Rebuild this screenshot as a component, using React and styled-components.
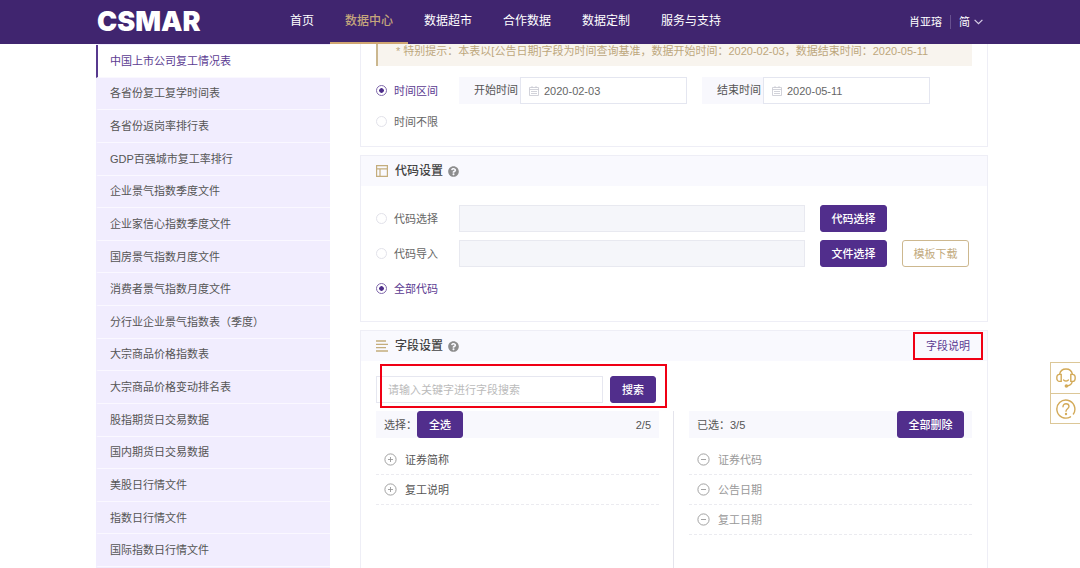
import React, { useState } from 'react';
import styled, { createGlobalStyle } from 'styled-components';
import { FaQuestionCircle } from 'react-icons/fa';

const GlobalStyle = createGlobalStyle`
    * {
        box-sizing: border-box;
    }

    body {
        margin: 0;
        background: #fff;
        color: #555;
        font-family: "Liberation Sans", "Noto Sans CJK SC", sans-serif;
        font-size: 11px;
        line-height: 14px;
    }

    button,
    input {
        font: inherit;
        margin: 0;
    }

    ul {
        list-style: none;
        margin: 0;
        padding: 0;
    }
`;

const Page = styled.div`
    display: flex;
    flex-direction: column;
    min-height: 100vh;
`;

const Header = styled.header`
    display: flex;
    align-items: center;
    height: 44px;
    padding: 0 97px;
    background: #40256f;
    color: #fff;
`;

const Logo = styled.a`
    width: 178px;
    color: #fff;
    font-family: Inter, sans-serif;
    font-size: 27px;
    font-weight: 900;
    line-height: 30px;
    text-decoration: none;
`;

const Nav = styled.nav`
    display: flex;
    gap: 1px;
    flex: 1;
`;

const NavLink = styled.a`
    height: 44px;
    padding: 0 15px;
    border-bottom: 2px solid ${props => (props.$active ? '#d0a672' : 'transparent')};
    color: ${props => (props.$active ? '#c4a57c' : '#fff')};
    font-size: 12px;
    font-weight: ${props => (props.$active ? 500 : 400)};
    line-height: 42px;
    text-decoration: none;
    white-space: nowrap;
`;

const UserArea = styled.div`
    display: flex;
    align-items: center;
    white-space: nowrap;
`;

const LanguageButton = styled.button`
    display: flex;
    align-items: center;
    gap: 4px;
    margin-left: 8px;
    padding: 0 0 0 8px;
    border: 0;
    border-left: 1px solid #68508f;
    background: none;
    color: #fff;
    line-height: 14px;
`;

const Body = styled.div`
    display: flex;
    flex: 1;
    gap: 30px;
    padding: 0 92px 0 96px;
`;

const Sidebar = styled.ul`
    && {
        display: flex;
        flex-direction: column;
        width: 234px;
        padding: 1px 0;
        background: #f1edfe;
    }
`;

const SidebarItem = styled.li`
    display: flex;
    flex: 1;
    min-height: 32px;
    border-bottom: 1px solid #faf8ff;
    border-left: 2px solid ${props => (props.$active ? '#57398e' : 'transparent')};
    background: ${props => (props.$active ? '#fff' : 'transparent')};
`;

const SidebarLink = styled.a`
    display: flex;
    flex: 1;
    align-items: center;
    padding-left: 12px;
    color: ${props => (props.$active ? '#5b3c92' : '#555')};
    text-decoration: none;
`;

const Main = styled.main`
    display: flex;
    flex: 1;
    flex-direction: column;
    gap: 8px;
    min-width: 0;
`;

const Panel = styled.section`
    display: flex;
    flex-direction: column;
    flex-grow: ${props => (props.$grow ? 1 : 0)};
    border: 1px solid #eeeef6;
    border-width: ${props => props.$borders || '1px'};
`;

const PanelHeader = styled.div`
    display: flex;
    align-items: center;
    height: 30px;
    padding: 0 4px 0 15px;
    background: #f9f9fe;
`;

const PanelTitle = styled.h2`
    flex: 1;
    display: flex;
    align-items: center;
    gap: 7px;
    margin: 0;
    color: #444;
    font-size: 12px;
    font-weight: 500;
    line-height: 16px;
`;

const HelpIcon = styled(FaQuestionCircle)`
    margin-left: -2px;
    color: #8d8d8d;
    font-size: 11px;
`;

const Notice = styled.div`
    margin: 0 15px;
    padding: 0 0 8px 18px;
    border-left: 2px solid #cbb78e;
    background: #f8f4ee;
    color: #bda77c;
    white-space: nowrap;
`;

const TimeForm = styled.div`
    display: grid;
    gap: 4px;
    padding: 11px 15px 11px;
`;

const TimeRow = styled.div`
    display: flex;
    align-items: center;
    height: 27px;
    padding-right: 42px;
`;

const DateFields = styled.div`
    display: flex;
    flex: 1;
    gap: 15px;
`;

const DateLabel = styled.label`
    display: flex;
    flex: 1;
    height: 27px;
    padding-left: 15px;
    background: #f8f8fd;
    line-height: 27px;
    white-space: nowrap;
`;

const DateBox = styled.span`
    display: flex;
    flex: 1;
    align-items: center;
    gap: 5px;
    margin-left: 2px;
    padding-left: 8px;
    border: 1px solid #e4e6f0;
    background: #fff;
`;

const DateInput = styled.input`
    flex: 1;
    width: 0;
    height: 25px;
    padding: 0;
    border: 0;
    outline: none;
    background: transparent;
    color: #666;
    line-height: 14px;
`;

const RadioLabel = styled.label`
    display: flex;
    align-items: center;
    gap: 7px;
    width: 83px;
    color: ${props => (props.$checked ? '#5b3c92' : '#666')};
    white-space: nowrap;
`;

const RadioInput = styled.input`
    appearance: none;
    width: 11px;
    height: 11px;
    padding: 2px;
    border: 1px solid #e2e2ea;
    border-radius: 50%;
    background-clip: content-box;

    &:checked {
        border-color: #8069ab;
        background-image: radial-gradient(circle, #4d2d89 2px, transparent 3px);
    }
`;

const CodeForm = styled.div`
    display: grid;
    grid-template-columns: 68px 1fr 67px 67px;
    grid-auto-rows: 27px;
    gap: 8px 15px;
    padding: 19px 18px 19px 15px;
`;

const CodeInput = styled.input`
    grid-column: 2;
    width: 100%;
    border: 1px solid #e8e9f0;
    background: #f5f6fa;
`;

const Button = styled.button`
    width: ${props => (props.$small ? '46px' : '67px')};
    height: 27px;
    padding: 0;
    border: 1px solid ${props => (props.$outline ? '#cdb88f' : '#512e8c')};
    border-radius: 3px;
    background: ${props => (props.$outline ? '#fff' : '#512e8c')};
    color: ${props => (props.$outline ? '#c3ab80' : '#fff')};
    font-weight: ${props => (props.$outline ? 400 : 500)};
    line-height: 14px;
    white-space: nowrap;
`;

const DescriptionLink = styled.a`
    padding: 3px 11px;
    border: 2px solid #f00014;
    color: #5b3c92;
    line-height: 18px;
    text-decoration: none;
`;

const SearchForm = styled.form`
    position: relative;
    display: flex;
    gap: 7px;
    width: 280px;
    margin: 15px 15px 8px;

    &::after {
        content: "";
        position: absolute;
        inset: -12px -11px -5px 4px;
        border: 2px solid #f00014;
        pointer-events: none;
    }
`;

const SearchInput = styled.input`
    flex: 1;
    width: 0;
    height: 27px;
    padding: 0 11px;
    border: 1px solid #e6e7f0;
    outline: none;
    color: #555;

    &::placeholder {
        color: #bbb;
    }
`;

const Columns = styled.div`
    display: flex;
    flex: 1;
    padding: 0 15px;
`;

const Column = styled.div`
    flex: 1;
    min-height: 156px;

    & + & {
        margin-left: 14px;
        padding-left: 15px;
        border-left: 1px solid #e4e4ec;
    }
`;

const ColumnHeader = styled.div`
    display: flex;
    align-items: center;
    justify-content: space-between;
    height: 27px;
    padding: 0 8px;
    background: #f8f8fd;
`;

const FieldList = styled.ul`
    && {
        padding-top: 7px;
    }
`;

const FieldRow = styled.li`
    height: 30px;
    border-bottom: 1px dashed #ebebf0;
`;

const FieldButton = styled.button`
    display: flex;
    align-items: center;
    gap: 8px;
    width: 100%;
    height: 29px;
    padding: 0 8px;
    border: 0;
    background: none;
    color: ${props => (props.$muted ? '#999' : '#555')};
    line-height: 14px;
`;

const ServiceBar = styled.div`
    position: fixed;
    top: 362px;
    right: 0;
    width: 30px;
    border: 1px solid #dcc797;
    border-right: 0;
    background: #fff;
`;

const ServiceButton = styled.button`
    display: flex;
    align-items: center;
    justify-content: center;
    width: 100%;
    height: 30px;
    padding: 0;
    border: 0;
    background: none;

    & + & {
        border-top: 1px solid #dcc797;
    }
`;

const NAV_ITEMS = ['首页', '数据中心', '数据超市', '合作数据', '数据定制', '服务与支持'];

const TABLES = [
    '中国上市公司复工情况表',
    '各省份复工复学时间表',
    '各省份返岗率排行表',
    'GDP百强城市复工率排行',
    '企业景气指数季度文件',
    '企业家信心指数季度文件',
    '国房景气指数月度文件',
    '消费者景气指数月度文件',
    '分行业企业景气指数表（季度）',
    '大宗商品价格指数表',
    '大宗商品价格变动排名表',
    '股指期货日交易数据',
    '国内期货日交易数据',
    '美股日行情文件',
    '指数日行情文件',
    '国际指数日行情文件'
];

const AVAILABLE_FIELDS = ['证券简称', '复工说明'];
const SELECTED_FIELDS = ['证券代码', '公告日期', '复工日期'];

const ChevronIcon = () => (
    <svg width="9" height="6" viewBox="0 0 9 6" fill="none" stroke="#d8cfe6" strokeWidth="1.2">
        <path d="M.6 .8 4.5 4.7 8.4 .8" />
    </svg>
);

const CalendarIcon = () => (
    <svg width="10" height="10" viewBox="0 0 10 10" fill="none" stroke="#c6c8d0" strokeWidth=".8">
        <path d="M.5 1.5h9v8h-9zM.5 3.5h9M3 0v2M7 0v2M2 5.5h6M2 7.5h6" />
    </svg>
);

const TableIcon = () => (
    <svg width="12" height="12" viewBox="0 0 12 12" fill="none" stroke="#c4ad7c" strokeWidth="1.2">
        <path d="M.6 .6h10.8v10.8H.6zM.6 3.8h10.8M4 3.8v7.6" />
    </svg>
);

const LinesIcon = () => (
    <svg width="12" height="12" viewBox="0 0 12 12" fill="none" stroke="#c4ad7c" strokeWidth="1.3">
        <path d="M0 1h10M0 4.3h12M0 7.6h10M0 11h12" />
    </svg>
);

const CircleIcon = ({ plus }) => (
    <svg width="13" height="13" viewBox="0 0 13 13" fill="none" stroke="#999" strokeWidth=".9">
        <circle cx="6.5" cy="6.5" r="5.6" />
        <path d={plus ? 'M4 6.5h5M6.5 4v5' : 'M4 6.5h5'} />
    </svg>
);

const HeadsetIcon = () => (
    <svg width="20" height="20" viewBox="0 0 20 20" fill="none" stroke="#d3aa58" strokeWidth="1.4" strokeLinecap="round">
        <path d="M3.6 6.4C4.2 3 6.6 1 10 1s5.800 2 6.400 5.400" />
        <path d="M5.200 6.400v7H3.600C1.800 13.400.8 12 .8 9.900s1-3.500 2.800-3.500zM14.800 6.400v7h1.600c1.800 0 2.800-1.400 2.800-3.500s-1-3.500-2.800-3.500z" />
        <path d="M7.600 12c1.500 1.300 3.300 1.300 4.800 0M16.200 13.600c-.4 2.400-2 3.900-5 4.400" />
        <circle cx="10.400" cy="18" r="1.100" fill="#d3aa58" />
    </svg>
);

const QuestionIcon = () => (
    <svg width="20" height="20" viewBox="0 0 20 20" fill="none" stroke="#d3aa58" strokeWidth="1.4" strokeLinecap="round">
        <path d="M14.5 17.8A9 9 0 1 1 17.4 15" />
        <path d="M7 7.800C7 5.900 8.300 4.800 10 4.800s3 1.100 3 2.700c0 2.100-3 2.400-3 4.700" />
        <circle cx="10" cy="15" r=".5" fill="#d3aa58" />
    </svg>
);

const Radio = ({ name, label, value, onChange }) => (
    <RadioLabel $checked={value === label}>
        <RadioInput
            type="radio"
            name={name}
            checked={value === label}
            onChange={() => onChange(label)}
        />
        {label}
    </RadioLabel>
);

const DateField = ({ label, value, onChange }) => (
    <DateLabel>
        {label}
        <DateBox>
            <CalendarIcon />
            <DateInput type="text" value={value} onChange={e => onChange(e.target.value)} />
        </DateBox>
    </DateLabel>
);

const App = () => {
    const [timeMode, setTimeMode] = useState('时间区间');
    const [codeMode, setCodeMode] = useState('全部代码');
    const [startDate, setStartDate] = useState('2020-02-03');
    const [endDate, setEndDate] = useState('2020-05-11');
    const [keyword, setKeyword] = useState('');

    return (
        <Page>
            <GlobalStyle />
            <Header>
                <Logo href="#">CSMAR</Logo>
                <Nav>
                    {NAV_ITEMS.map(item => (
                        <NavLink key={item} href="#" $active={item === '数据中心'}>{item}</NavLink>
                    ))}
                </Nav>
                <UserArea>
                    肖亚瑢
                    <LanguageButton type="button">
                        简
                        <ChevronIcon />
                    </LanguageButton>
                </UserArea>
            </Header>
            <Body>
                <Sidebar>
                    {TABLES.map((table, index) => (
                        <SidebarItem key={table} $active={index === 0}>
                            <SidebarLink href="#" $active={index === 0}>{table}</SidebarLink>
                        </SidebarItem>
                    ))}
                </Sidebar>
                <Main>
                    <Panel $borders="0 1px 1px">
                        <Notice>* 特别提示：本表以[公告日期]字段为时间查询基准，数据开始时间：2020-02-03，数据结束时间：2020-05-11</Notice>
                        <TimeForm>
                            <TimeRow>
                                <Radio name="time" label="时间区间" value={timeMode} onChange={setTimeMode} />
                                <DateFields>
                                    <DateField label="开始时间" value={startDate} onChange={setStartDate} />
                                    <DateField label="结束时间" value={endDate} onChange={setEndDate} />
                                </DateFields>
                            </TimeRow>
                            <TimeRow>
                                <Radio name="time" label="时间不限" value={timeMode} onChange={setTimeMode} />
                            </TimeRow>
                        </TimeForm>
                    </Panel>
                    <Panel>
                        <PanelHeader>
                            <PanelTitle>
                                <TableIcon />
                                代码设置
                                <HelpIcon />
                            </PanelTitle>
                        </PanelHeader>
                        <CodeForm>
                            <Radio name="code" label="代码选择" value={codeMode} onChange={setCodeMode} />
                            <CodeInput type="text" aria-label="代码选择" disabled />
                            <Button type="button">代码选择</Button>
                            <span />
                            <Radio name="code" label="代码导入" value={codeMode} onChange={setCodeMode} />
                            <CodeInput type="text" aria-label="代码导入" disabled />
                            <Button type="button">文件选择</Button>
                            <Button type="button" $outline>模板下载</Button>
                            <Radio name="code" label="全部代码" value={codeMode} onChange={setCodeMode} />
                        </CodeForm>
                    </Panel>
                    <Panel $grow $borders="1px 1px 0">
                        <PanelHeader>
                            <PanelTitle>
                                <LinesIcon />
                                字段设置
                                <HelpIcon />
                            </PanelTitle>
                            <DescriptionLink href="#">字段说明</DescriptionLink>
                        </PanelHeader>
                        <SearchForm onSubmit={e => e.preventDefault()}>
                            <SearchInput
                                type="text"
                                aria-label="字段搜索"
                                placeholder="请输入关键字进行字段搜索"
                                value={keyword}
                                onChange={e => setKeyword(e.target.value)}
                            />
                            <Button type="submit" $small>搜索</Button>
                        </SearchForm>
                        <Columns>
                            <Column>
                                <ColumnHeader>
                                    <span>
                                        选择：<Button type="button" $small>全选</Button>
                                    </span>
                                    <span>2/5</span>
                                </ColumnHeader>
                                <FieldList>
                                    {AVAILABLE_FIELDS.map(field => (
                                        <FieldRow key={field}>
                                            <FieldButton type="button">
                                                <CircleIcon plus />
                                                {field}
                                            </FieldButton>
                                        </FieldRow>
                                    ))}
                                </FieldList>
                            </Column>
                            <Column>
                                <ColumnHeader>
                                    <span>已选：3/5</span>
                                    <Button type="button">全部删除</Button>
                                </ColumnHeader>
                                <FieldList>
                                    {SELECTED_FIELDS.map(field => (
                                        <FieldRow key={field}>
                                            <FieldButton type="button" $muted>
                                                <CircleIcon />
                                                {field}
                                            </FieldButton>
                                        </FieldRow>
                                    ))}
                                </FieldList>
                            </Column>
                        </Columns>
                    </Panel>
                </Main>
            </Body>
            <ServiceBar>
                <ServiceButton type="button" aria-label="在线客服"><HeadsetIcon /></ServiceButton>
                <ServiceButton type="button" aria-label="帮助"><QuestionIcon /></ServiceButton>
            </ServiceBar>
        </Page>
    );
};

export default App;
